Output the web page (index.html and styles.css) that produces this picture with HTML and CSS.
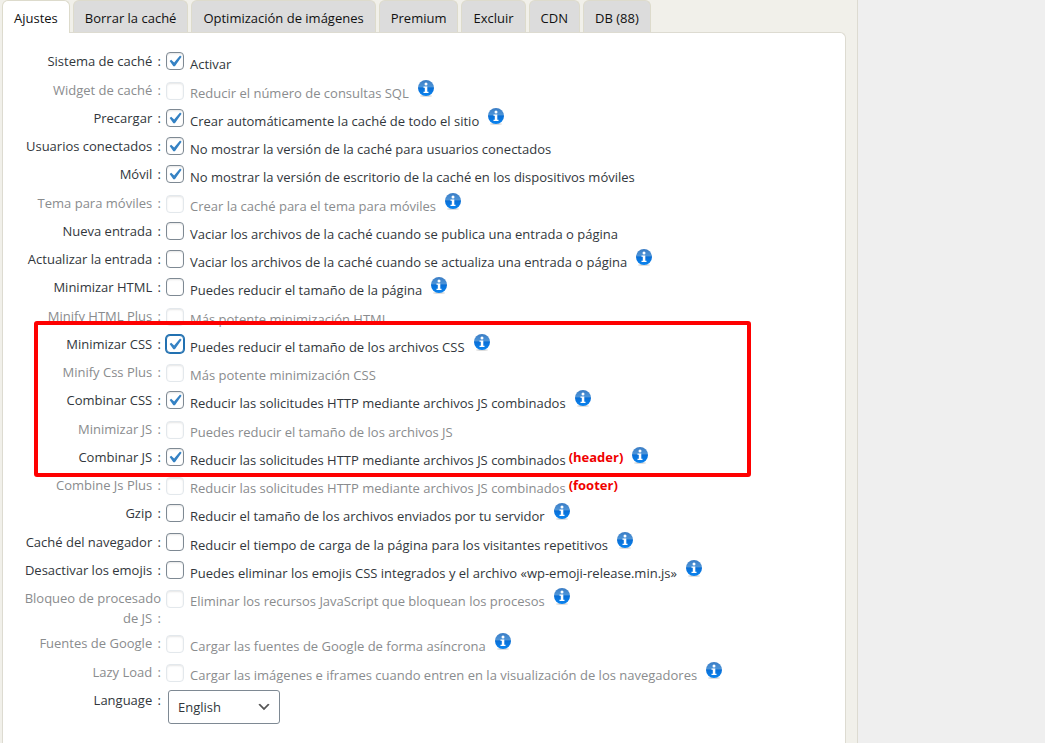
FILE: index.html
```
<!DOCTYPE html>
<html lang="es">

<head>
    <meta charset="UTF-8">
    <meta name="viewport" content="width=device-width, initial-scale=1.0">
    <title>Ajustes de caché</title>
    <link rel="stylesheet" href="styles.css">
</head>

<body>
    <!-- shared info icon -->
    <svg class="sprite" aria-hidden="true">
        <defs>
            <linearGradient id="infoBlue" x1="0" y1="0" x2="0" y2="1">
                <stop offset="0" stop-color="#3a7cc4"/>
                <stop offset="0.42" stop-color="#4d94d8"/>
                <stop offset="0.5" stop-color="#0a6fd6"/>
                <stop offset="1" stop-color="#0a84f0"/>
            </linearGradient>
            <symbol id="info" viewBox="0 0 16 18">
                <ellipse cx="8" cy="16" rx="6" ry="1" fill="#dcdcdc"/>
                <circle cx="8" cy="8" r="8" fill="url(#infoBlue)"/>
                <circle cx="8" cy="4" r="1.5" fill="#fff"/>
                <path d="M5.5 6.5h3.8v5.2h1.2v1.3h-5v-1.3h1.3V7.8H5.5z" fill="#fff"/>
            </symbol>
        </defs>
    </svg>
    <div class="layout">
        <main class="main">
            <nav class="tabs">
                <button type="button" class="tab active">Ajustes</button>
                <button type="button" class="tab">Borrar la caché</button>
                <button type="button" class="tab">Optimización de imágenes</button>
                <button type="button" class="tab">Premium</button>
                <button type="button" class="tab">Excluir</button>
                <button type="button" class="tab">CDN</button>
                <button type="button" class="tab">DB (88)</button>
            </nav>
            <form class="panel">
                <div class="row">
                    <div class="question">Sistema de caché <span>:</span></div>
                    <input type="checkbox" id="status" checked>
                    <label for="status">Activar</label>
                </div>
                <div class="row disabled">
                    <div class="question">Widget de caché <span>:</span></div>
                    <input type="checkbox" id="widget" disabled>
                    <label for="widget">Reducir el número de consultas SQL</label>
                    <a href="#widget" class="info" aria-label="Info"><svg><use href="#info"/></svg></a>
                </div>
                <div class="row">
                    <div class="question">Precargar <span>:</span></div>
                    <input type="checkbox" id="preload" checked>
                    <label for="preload">Crear automáticamente la caché de todo el sitio</label>
                    <a href="#preload" class="info" aria-label="Info"><svg><use href="#info"/></svg></a>
                </div>
                <div class="row">
                    <div class="question">Usuarios conectados <span>:</span></div>
                    <input type="checkbox" id="loggedin" checked>
                    <label for="loggedin">No mostrar la versión de la caché para usuarios conectados</label>
                </div>
                <div class="row">
                    <div class="question">Móvil <span>:</span></div>
                    <input type="checkbox" id="mobile" checked>
                    <label for="mobile">No mostrar la versión de escritorio de la caché en los dispositivos móviles</label>
                </div>
                <div class="row disabled">
                    <div class="question">Tema para móviles <span>:</span></div>
                    <input type="checkbox" id="mobileTheme" disabled>
                    <label for="mobileTheme">Crear la caché para el tema para móviles</label>
                    <a href="#mobileTheme" class="info" aria-label="Info"><svg><use href="#info"/></svg></a>
                </div>
                <div class="row">
                    <div class="question">Nueva entrada <span>:</span></div>
                    <input type="checkbox" id="newPost">
                    <label for="newPost">Vaciar los archivos de la caché cuando se publica una entrada o página</label>
                </div>
                <div class="row">
                    <div class="question">Actualizar la entrada <span>:</span></div>
                    <input type="checkbox" id="updatePost">
                    <label for="updatePost">Vaciar los archivos de la caché cuando se actualiza una entrada o página</label>
                    <a href="#updatePost" class="info" aria-label="Info"><svg><use href="#info"/></svg></a>
                </div>
                <div class="row">
                    <div class="question">Minimizar HTML <span>:</span></div>
                    <input type="checkbox" id="minifyHtml">
                    <label for="minifyHtml">Puedes reducir el tamaño de la página</label>
                    <a href="#minifyHtml" class="info" aria-label="Info"><svg><use href="#info"/></svg></a>
                </div>
                <div class="row disabled">
                    <div class="question">Minify HTML Plus <span>:</span></div>
                    <input type="checkbox" id="minifyHtmlPlus" disabled>
                    <label for="minifyHtmlPlus">Más potente minimización HTML</label>
                </div>
                <div class="row">
                    <div class="question">Minimizar CSS <span>:</span></div>
                    <input type="checkbox" id="minifyCss" class="focused" checked>
                    <label for="minifyCss">Puedes reducir el tamaño de los archivos CSS</label>
                    <a href="#minifyCss" class="info" aria-label="Info"><svg><use href="#info"/></svg></a>
                </div>
                <div class="row disabled">
                    <div class="question">Minify Css Plus <span>:</span></div>
                    <input type="checkbox" id="minifyCssPlus" disabled>
                    <label for="minifyCssPlus">Más potente minimización CSS</label>
                </div>
                <div class="row">
                    <div class="question">Combinar CSS <span>:</span></div>
                    <input type="checkbox" id="combineCss" checked>
                    <label for="combineCss">Reducir las solicitudes HTTP mediante archivos JS combinados</label>
                    <a href="#combineCss" class="info" aria-label="Info"><svg><use href="#info"/></svg></a>
                </div>
                <div class="row disabled">
                    <div class="question">Minimizar JS <span>:</span></div>
                    <input type="checkbox" id="minifyJs" disabled>
                    <label for="minifyJs">Puedes reducir el tamaño de los archivos JS</label>
                </div>
                <div class="row">
                    <div class="question">Combinar JS <span>:</span></div>
                    <input type="checkbox" id="combineJs" checked>
                    <label for="combineJs">Reducir las solicitudes HTTP mediante archivos JS combinados</label>
                    <b class="place">(header)</b>
                    <a href="#combineJs" class="info" aria-label="Info"><svg><use href="#info"/></svg></a>
                </div>
                <div class="row disabled">
                    <div class="question">Combine Js Plus <span>:</span></div>
                    <input type="checkbox" id="combineJsPlus" disabled>
                    <label for="combineJsPlus">Reducir las solicitudes HTTP mediante archivos JS combinados</label>
                    <b class="place">(footer)</b>
                </div>
                <div class="row">
                    <div class="question">Gzip <span>:</span></div>
                    <input type="checkbox" id="gzip">
                    <label for="gzip">Reducir el tamaño de los archivos enviados por tu servidor</label>
                    <a href="#gzip" class="info" aria-label="Info"><svg><use href="#info"/></svg></a>
                </div>
                <div class="row">
                    <div class="question">Caché del navegador <span>:</span></div>
                    <input type="checkbox" id="browserCache">
                    <label for="browserCache">Reducir el tiempo de carga de la página para los visitantes repetitivos</label>
                    <a href="#browserCache" class="info" aria-label="Info"><svg><use href="#info"/></svg></a>
                </div>
                <div class="row">
                    <div class="question">Desactivar los emojis <span>:</span></div>
                    <input type="checkbox" id="emojis">
                    <label for="emojis">Puedes eliminar los emojis CSS integrados y el archivo «wp-emoji-release.min.js»</label>
                    <a href="#emojis" class="info" aria-label="Info"><svg><use href="#info"/></svg></a>
                </div>
                <div class="row disabled">
                    <div class="question">Bloqueo de procesado<br>de JS <span>:</span></div>
                    <input type="checkbox" id="renderBlocking" disabled>
                    <label for="renderBlocking">Eliminar los recursos JavaScript que bloquean los procesos</label>
                    <a href="#renderBlocking" class="info" aria-label="Info"><svg><use href="#info"/></svg></a>
                </div>
                <div class="row disabled">
                    <div class="question">Fuentes de Google <span>:</span></div>
                    <input type="checkbox" id="googleFonts" disabled>
                    <label for="googleFonts">Cargar las fuentes de Google de forma asíncrona</label>
                    <a href="#googleFonts" class="info" aria-label="Info"><svg><use href="#info"/></svg></a>
                </div>
                <div class="row disabled">
                    <div class="question">Lazy Load <span>:</span></div>
                    <input type="checkbox" id="lazyLoad" disabled>
                    <label for="lazyLoad">Cargar las imágenes e iframes cuando entren en la visualización de los navegadores</label>
                    <a href="#lazyLoad" class="info" aria-label="Info"><svg><use href="#info"/></svg></a>
                </div>
                <div class="row">
                    <label class="question" for="language">Language <span>:</span></label>
                    <select id="language">
                        <option>English</option>
                        <option>Español</option>
                    </select>
                </div>
                <div class="highlight"></div>
            </form>
        </main>
        <aside class="sidebar"></aside>
    </div>
</body>

</html>
```
FILE: styles.css
```
* {
    box-sizing: border-box;
}

body {
    margin: 0;
    font-family: "Segoe UI", "Open Sans", sans-serif;
    font-size: 13px;
    line-height: 20px;
    color: #32373c;
    background-color: #efefef;
}

.sprite {
    position: absolute;
    width: 0;
    height: 0;
}

.layout {
    display: grid;
    grid-template-columns: minmax(0, 1fr) 187px;
    min-height: 100vh;
}

.main {
    display: flex;
    flex-direction: column;
    padding: 0 11px 0 2px;
    background-color: #f1f0ea;
    border-right: 1px solid #dddbd1;
}

.tabs {
    display: flex;
    gap: 3px;
}

.tab {
    height: 32px;
    padding: 2px 11px 0;
    font: inherit;
    color: #111;
    white-space: nowrap;
    background-color: #dcdcdc;
    border: 1px solid #dddbcc;
    border-bottom: none;
    border-radius: 6px 6px 0 0;
    cursor: pointer;
}

.tab.active {
    height: 33px;
    margin-bottom: -1px;
    background-color: #fff;
    z-index: 1;
}

.panel {
    position: relative;
    flex: 1;
    padding: 18px 0 20px;
    background-color: #fff;
    border: 1px solid #dddbd1;
    border-bottom: none;
    border-top-right-radius: 6px;
}

.row {
    display: flex;
    align-items: flex-start;
    min-height: 28px;
    white-space: nowrap;
}

.row:nth-child(4n+1) {
    min-height: 29px;
}

.question {
    width: 158px;
    margin-right: 5px;
    text-align: right;
}

.question span {
    margin-left: 2px;
}

.row.disabled .question,
.row.disabled label {
    color: #8a8c8e;
}

.row input + label {
    padding-top: 3px;
}

.question:has(br) {
    padding-bottom: 5px;
}

input[type="checkbox"] {
    appearance: none;
    flex: none;
    width: 18px;
    height: 18px;
    margin: 1px 6px 0 0;
    background-color: #fff;
    border: 1px solid #7e8993;
    border-radius: 4px;
    box-shadow: inset 0 1px 2px rgba(0, 0, 0, 0.1);
}

input[type="checkbox"]:checked {
    background-image: url("data:image/svg+xml,%3Csvg xmlns='http://www.w3.org/2000/svg' viewBox='0 0 20 20'%3E%3Cpath d='M14.83 4.89l1.34.94-5.81 8.38H9.02L5.78 9.67l1.34-1.25 2.57 2.4z' fill='%233582c4'/%3E%3C/svg%3E");
    background-repeat: no-repeat;
    background-size: 23px 23px;
    background-position: -4px -3px;
}

input[type="checkbox"]:disabled {
    margin-top: 2px;
    border-color: #e3e8ec;
}

input[type="checkbox"].focused {
    border-color: #2271b1;
    box-shadow: 0 0 0 1px #2271b1;
}

.place {
    margin-left: 3px;
    color: #f00000;
}

.info {
    height: 18px;
    margin-left: 9px;
}

.info svg {
    display: block;
    width: 16px;
    height: 18px;
}

select {
    appearance: none;
    width: 112px;
    height: 34px;
    margin-left: 2px;
    padding: 0 9px;
    font: inherit;
    color: #32373c;
    background: #fff url("data:image/svg+xml,%3Csvg xmlns='http://www.w3.org/2000/svg' viewBox='0 0 20 20'%3E%3Cpath d='M5 6l5 5 5-5 2 1-7 7-7-7z' fill='%23555'/%3E%3C/svg%3E") no-repeat right 7px center;
    background-size: 16px 16px;
    border: 1px solid #7e8993;
    border-radius: 3px;
}

/* red frame round the CSS and JS options */
.highlight {
    position: absolute;
    top: 288px;
    left: 31px;
    width: 717px;
    height: 156px;
    border: 4px solid #fe0000;
    border-radius: 3px;
    pointer-events: none;
}
```
